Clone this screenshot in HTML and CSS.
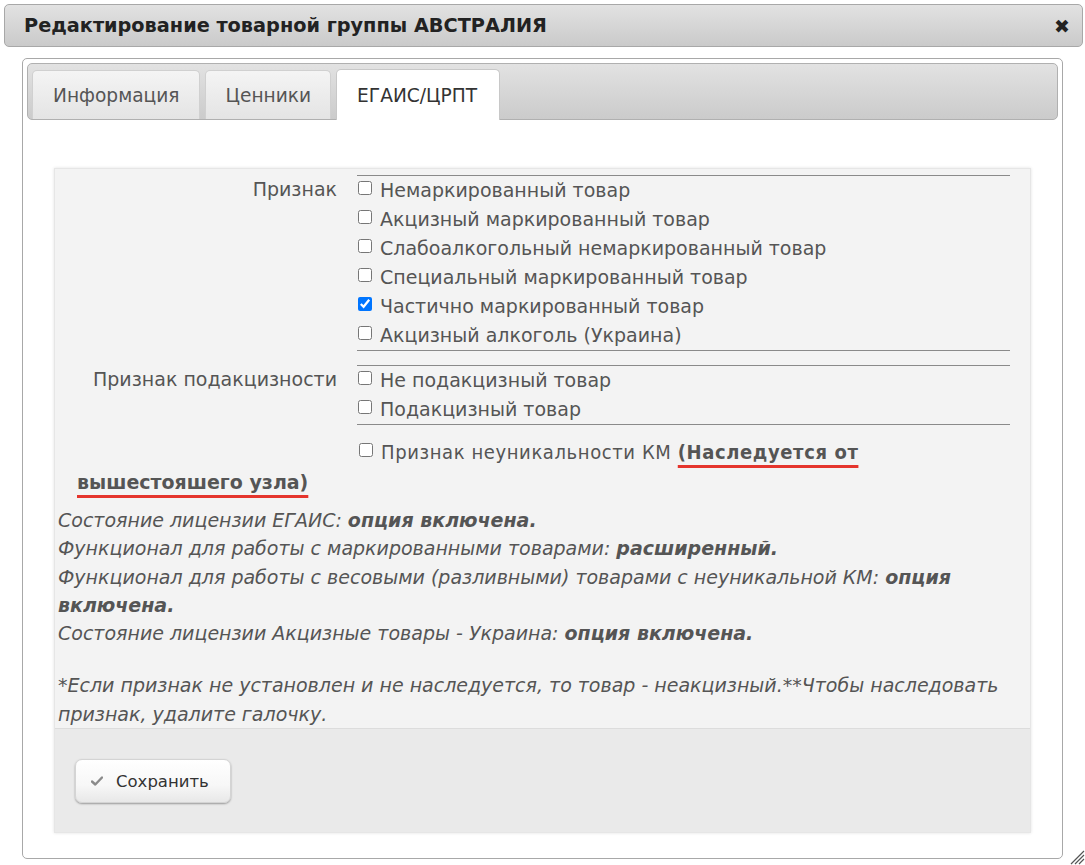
FILE: index.html
```html
<!DOCTYPE html>
<html lang="ru">
<head>
<meta charset="utf-8">
<title>Редактирование товарной группы</title>
<link rel="stylesheet" href="styles.css">
</head>
<body>
<div class="dialog">
  <div class="titlebar">
    <span class="title">Редактирование товарной группы АВСТРАЛИЯ</span>
    <span class="close">✖</span>
  </div>
  <div class="content">
    <div class="tabs">
      <div class="tab">Информация</div>
      <div class="tab">Ценники</div>
      <div class="tab active">ЕГАИС/ЦРПТ</div>
    </div>
    <div class="panel">
      <div class="form">
        <div class="row">
          <div class="label">Признак</div>
          <div class="opts">
            <label class="opt"><input type="checkbox"> Немаркированный товар</label>
            <label class="opt"><input type="checkbox"> Акцизный маркированный товар</label>
            <label class="opt"><input type="checkbox"> Слабоалкогольный немаркированный товар</label>
            <label class="opt"><input type="checkbox"> Специальный маркированный товар</label>
            <label class="opt"><input type="checkbox" checked> Частично маркированный товар</label>
            <label class="opt"><input type="checkbox"> Акцизный алкоголь (Украина)</label>
          </div>
        </div>
        <div class="row">
          <div class="label">Признак подакцизности</div>
          <div class="opts">
            <label class="opt"><input type="checkbox"> Не подакцизный товар</label>
            <label class="opt"><input type="checkbox"> Подакцизный товар</label>
          </div>
        </div>
        <div class="km">
          <input type="checkbox"> <span class="cond">Признак неуникальности КМ <b class="mark">(Наследуется от</b></span> <b class="mark">вышестояшего узла)</b>
        </div>
        <div class="info">
          <div>Состояние лицензии ЕГАИС: <b>опция включена.</b></div>
          <div>Функционал для работы с маркированными товарами: <b>расширенный.</b></div>
          <div>Функционал для работы с весовыми (разливными) товарами с неуникальной КМ: <b>опция</b> <b>включена.</b></div>
          <div>Состояние лицензии Акцизные товары - Украина: <b>опция включена.</b></div>
          <p class="note">*Если признак не установлен и не наследуется, то товар - неакцизный.**Чтобы наследовать признак, удалите галочку.</p>
        </div>
      </div>
      <div class="footer">
        <button class="btn" type="button">
          <svg class="chk" width="12" height="10" viewBox="0 0 12 10"><path d="M1 5.5 L4.3 8.5 L11 1.5" fill="none" stroke="#8a8a8a" stroke-width="2.4" stroke-linecap="round" stroke-linejoin="round"/></svg>
          Сохранить
        </button>
      </div>
    </div>
  </div>
  <svg class="grip" width="17" height="17" viewBox="0 0 17 17"><path d="M16 3 L3 16 M16 7 L7 16 M16 11 L11 16" stroke="#555" stroke-width="1.2"/></svg>
</div>
</body>
</html>
```
FILE: styles.css
```css
html, body {
  margin: 0;
  padding: 0;
  background: #fff;
}
body {
  font-family: "DejaVu Sans", Verdana, sans-serif;
  color: #555;
}
.dialog {
  position: relative;
  width: 1085px;
  height: 865px;
  padding: 4px 2px 0 4px;
  box-sizing: border-box;
}
.titlebar {
  height: 43px;
  box-sizing: border-box;
  border: 1px solid #a8a8a8;
  border-radius: 5px;
  background: linear-gradient(#e2e2e2, #cacaca);
  display: flex;
  align-items: center;
  justify-content: space-between;
  padding: 0 12px 0 19px;
}
.title {
  font-weight: bold;
  font-size: 19.3px;
  color: #222;
}
.close {
  font-size: 19px;
  color: #222;
}
.content {
  margin: 11px 20px 0 18px;
  height: 801px;
  box-sizing: border-box;
  border: 1px solid #a8a8a8;
  border-radius: 5px;
  background: #fff;
  padding: 4px 4px 0 4px;
}
.tabs {
  height: 57px;
  box-sizing: border-box;
  border: 1px solid #b0b0b0;
  border-radius: 5px;
  background: linear-gradient(#e2e2e2, #cbcbcb);
  display: flex;
  gap: 5px;
  padding: 5px 4px 0 4px;
  align-items: flex-end;
}
.tab {
  height: 49px;
  box-sizing: border-box;
  padding: 0 19px 0 20px;
  display: flex;
  align-items: center;
  font-size: 18.6px;
  color: #555;
  border: 1px solid #d0d0d0;
  border-bottom: none;
  border-radius: 5px 5px 0 0;
  background: linear-gradient(#f4f4f4, #e4e4e4);
}
.tab.active {
  height: 51px;
  margin-bottom: -1px;
  padding: 0 22px 0 20px;
  background: #fff;
  color: #333;
  border-color: #c8c8c8;
}
.panel {
  margin: 48px 27px 0 27px;
  background: #f3f3f3;
  border: 1px solid #e6e6e6;
  box-shadow: 0 0 3px rgba(0,0,0,0.12);
}
.form {
  padding: 6px 20px 0 2px;
}
.row {
  display: grid;
  grid-template-columns: 280px 1fr;
  column-gap: 20px;
  margin-bottom: 14px;
}
.label {
  text-align: right;
  font-size: 19px;
  line-height: 29px;
}
.opts {
  border-top: 1px solid #8a8a8a;
  border-bottom: 1px solid #8a8a8a;
  display: flex;
  flex-direction: column;
}
.opt {
  font-size: 19px;
  line-height: 29px;
  height: 29px;
  display: flex;
  align-items: center;
  gap: 8px;
  white-space: nowrap;
}
.opt input, .km input {
  width: 14px;
  height: 14px;
  margin: 0 0 5px 1px;
}
.km {
  font-size: 19px;
  line-height: 30px;
  padding: 0 150px 0 20px;
  text-indent: 281px;
  margin-top: -2px;
}
.km input {
  vertical-align: middle;
  margin-right: 2px;
  margin-bottom: 8px;
}
.cond {
  font-family: "DejaVu Sans Condensed", "DejaVu Sans", sans-serif;
  font-size: 20px;
  letter-spacing: 0.6px;
}
.mark {
  font-weight: bold;
  text-decoration: underline;
  text-decoration-color: #e5352d;
  text-decoration-thickness: 3px;
  text-underline-offset: 6px;
  text-decoration-skip-ink: none;
}
.info {
  font-style: italic;
  font-size: 19px;
  line-height: 28.3px;
  padding: 9px 0 0 1px;
  color: #555;
}
.note {
  margin: 24px 0 0 0;
}
.footer {
  background: #eaeaea;
  border-top: 1px solid #dcdcdc;
  height: 104px;
  box-sizing: border-box;
  padding: 30px 0 0 20px;
}
.btn {
  width: 156px;
  height: 44px;
  border: 1px solid #d4d4d4;
  border-radius: 7px;
  background: linear-gradient(#ffffff, #f7f7f7 60%, #e8e8e8);
  box-shadow: 0 1px 2px rgba(0,0,0,0.35);
  font-family: "DejaVu Sans", Verdana, sans-serif;
  font-size: 16.5px;
  color: #333;
  display: flex;
  align-items: center;
  gap: 13px;
  padding: 0 0 0 15px;
}
.grip {
  position: absolute;
  right: 0;
  bottom: 0;
}
```
